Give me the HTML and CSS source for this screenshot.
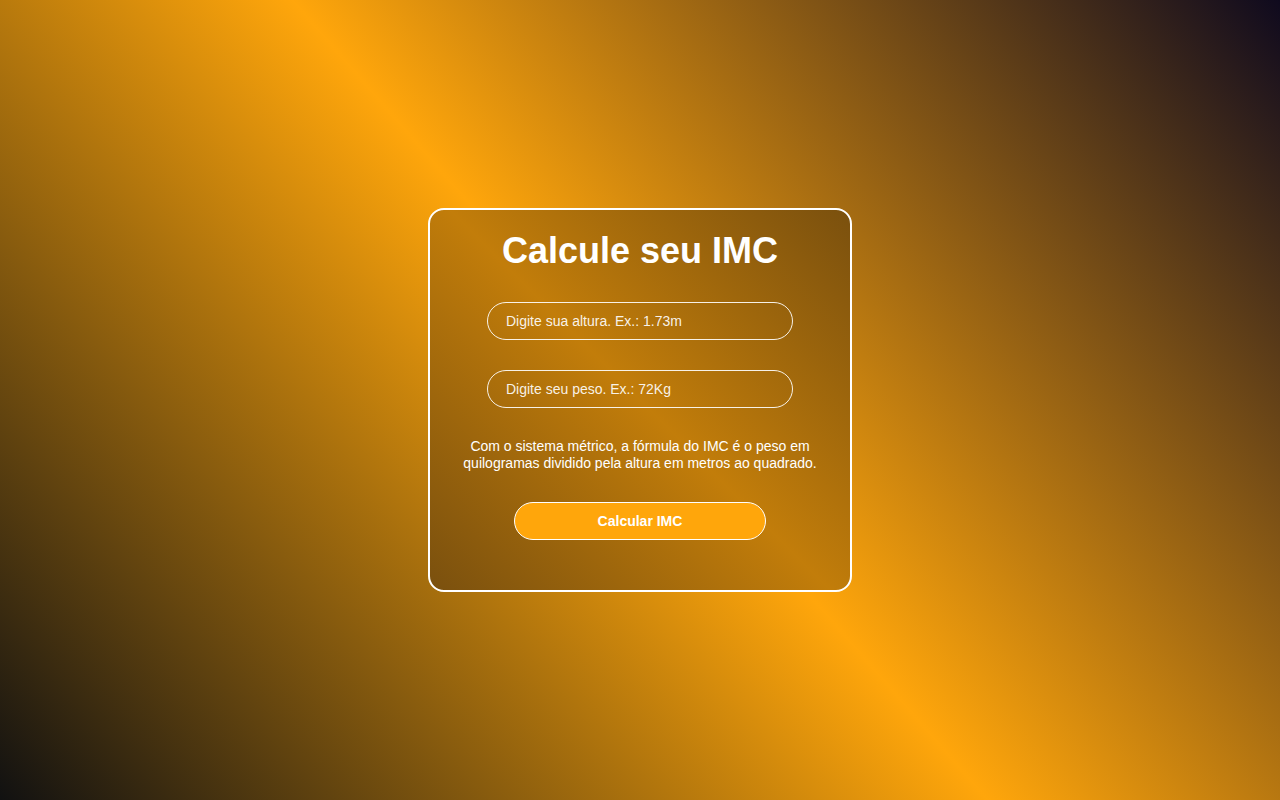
FILE: index.html
```html
<!DOCTYPE html>
<html lang="pt-BR">
<head>
<meta charset="utf-8">
<title>Calcule seu IMC</title>
<link rel="stylesheet" href="styles.css">
</head>
<body>
  <main class="card">
    <h1 class="title">Calcule seu IMC</h1>
    <input class="field" type="text" placeholder="Digite sua altura. Ex.: 1.73m">
    <input class="field" type="text" placeholder="Digite seu peso. Ex.: 72Kg">
    <p class="info">Com o sistema métrico, a fórmula do IMC é o peso em quilogramas dividido pela altura em metros ao quadrado.</p>
    <button class="btn" type="button">Calcular IMC</button>
  </main>
</body>
</html>
```

FILE: styles.css
```css
* {
  box-sizing: border-box;
}

html, body {
  margin: 0;
  height: 100%;
}

body {
  font-family: "Liberation Sans", Arial, sans-serif;
  background: linear-gradient(49deg, #111111 0%, #ffa60b 50%, #0f0a1e 100%);
  display: flex;
  align-items: center;
  justify-content: center;
  min-height: 100vh;
}

.card {
  width: 424px;
  border: 2px solid #ffffff;
  border-radius: 16px;
  padding: 20px 30px 50px;
  background: linear-gradient(45deg, #7a500e 0%, #c27d0a 50%, #7a500e 100%);
  display: flex;
  flex-direction: column;
  align-items: center;
  gap: 30px;
  color: #ffffff;
}

.title {
  margin: 0;
  font-size: 36px;
  font-weight: 700;
  line-height: 42px;
  text-align: center;
}

.field {
  width: 306px;
  height: 38px;
  border: 1px solid rgba(255, 255, 255, 0.9);
  border-radius: 20px;
  background: transparent;
  padding: 0 18px;
  font-family: "Liberation Sans", Arial, sans-serif;
  font-size: 14px;
  color: #ffffff;
  outline: none;
}

.field::placeholder {
  color: rgba(255, 255, 255, 0.92);
}

.info {
  margin: 0;
  font-size: 14px;
  line-height: 17px;
  text-align: center;
}

.btn {
  width: 252px;
  height: 38px;
  border: 1px solid #ffffff;
  border-radius: 20px;
  background: #ffa60b;
  color: #ffffff;
  font-family: "Liberation Sans", Arial, sans-serif;
  font-size: 14px;
  font-weight: 700;
  cursor: pointer;
}
```
